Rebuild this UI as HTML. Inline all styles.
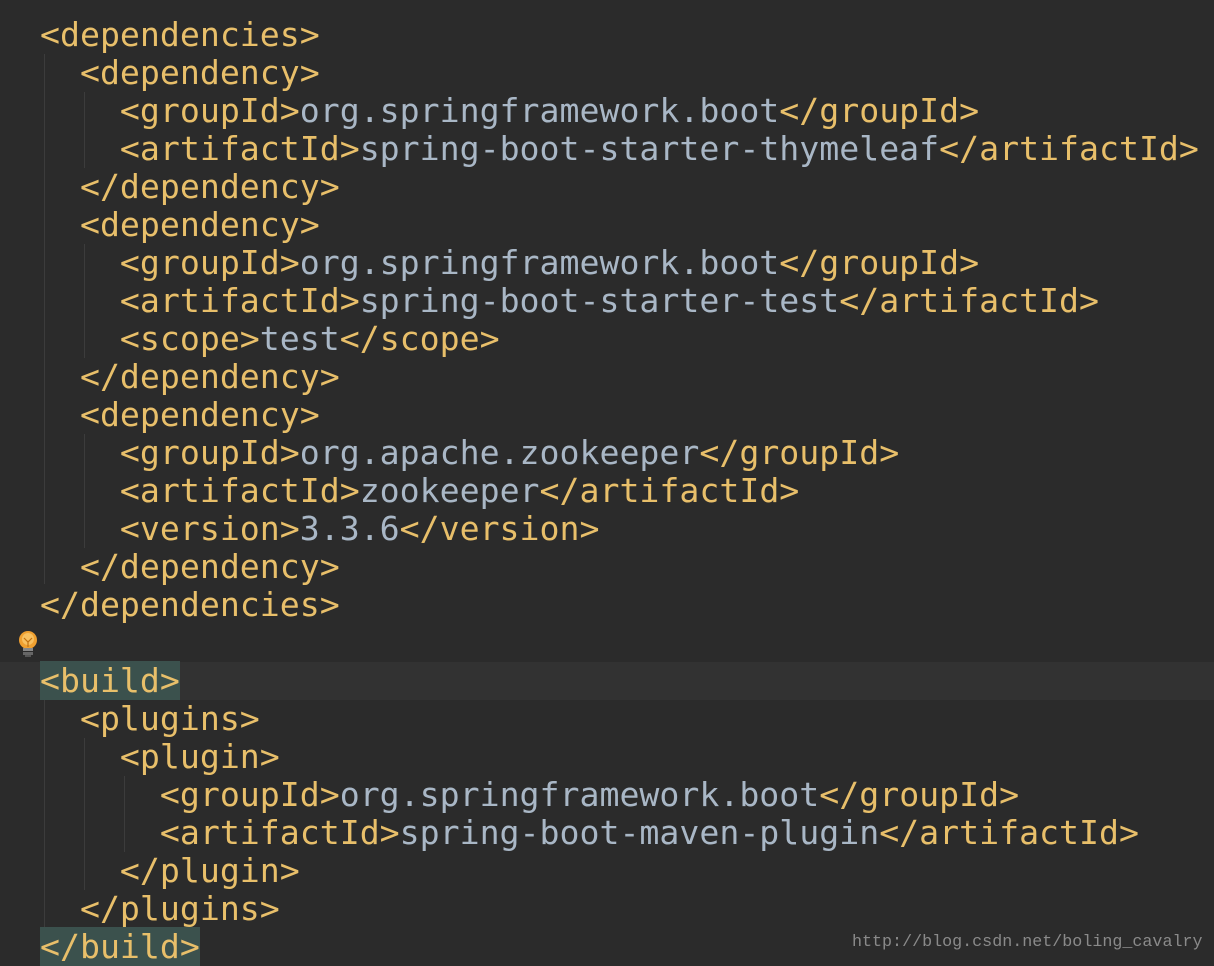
<!DOCTYPE html>
<html><head><meta charset="utf-8"><style>
html,body{margin:0;padding:0;}
body{width:1214px;height:964px;background:#2b2b2b;position:relative;overflow:hidden;font-family:"DejaVu Sans Mono","Liberation Mono",monospace;font-size:33.2px;}
.l{position:absolute;left:40px;height:38px;line-height:38px;white-space:pre;color:#e8bf6a;}
.v{color:#a9b7c6;}
.g{position:absolute;width:1px;background:#3c3c3c;}
.hl{background:#3b514d;}
</style></head><body>
<div style="position:absolute;left:0;top:662px;width:1214px;height:38px;background:#323232"></div>
<div class="g" style="left:44px;top:54px;height:530px"></div>
<div class="g" style="left:84px;top:92px;height:76px"></div>
<div class="g" style="left:84px;top:244px;height:114px"></div>
<div class="g" style="left:84px;top:434px;height:114px"></div>
<div class="g" style="left:44px;top:700px;height:228px"></div>
<div class="g" style="left:84px;top:738px;height:152px"></div>
<div class="g" style="left:124px;top:776px;height:76px"></div>
<div class="l" style="top:16px">&lt;dependencies&gt;</div>
<div class="l" style="top:54px">  &lt;dependency&gt;</div>
<div class="l" style="top:92px">    &lt;groupId&gt;<span class="v">org.springframework.boot</span>&lt;/groupId&gt;</div>
<div class="l" style="top:130px">    &lt;artifactId&gt;<span class="v">spring-boot-starter-thymeleaf</span>&lt;/artifactId&gt;</div>
<div class="l" style="top:168px">  &lt;/dependency&gt;</div>
<div class="l" style="top:206px">  &lt;dependency&gt;</div>
<div class="l" style="top:244px">    &lt;groupId&gt;<span class="v">org.springframework.boot</span>&lt;/groupId&gt;</div>
<div class="l" style="top:282px">    &lt;artifactId&gt;<span class="v">spring-boot-starter-test</span>&lt;/artifactId&gt;</div>
<div class="l" style="top:320px">    &lt;scope&gt;<span class="v">test</span>&lt;/scope&gt;</div>
<div class="l" style="top:358px">  &lt;/dependency&gt;</div>
<div class="l" style="top:396px">  &lt;dependency&gt;</div>
<div class="l" style="top:434px">    &lt;groupId&gt;<span class="v">org.apache.zookeeper</span>&lt;/groupId&gt;</div>
<div class="l" style="top:472px">    &lt;artifactId&gt;<span class="v">zookeeper</span>&lt;/artifactId&gt;</div>
<div class="l" style="top:510px">    &lt;version&gt;<span class="v">3.3.6</span>&lt;/version&gt;</div>
<div class="l" style="top:548px">  &lt;/dependency&gt;</div>
<div class="l" style="top:586px">&lt;/dependencies&gt;</div>
<svg style="position:absolute;left:17px;top:630px" width="22" height="30" viewBox="0 0 22 30">
<circle cx="11" cy="10" r="9" fill="#f0a030"/><circle cx="11" cy="9" r="6" fill="#f8c060"/>
<path d="M7 8l4 4 4-4M11 12v5" stroke="#c07010" stroke-width="1.2" fill="none"/>
<rect x="6" y="18" width="10" height="3" fill="#888"/><rect x="6" y="22" width="10" height="3" fill="#666"/><rect x="8" y="25" width="6" height="2" fill="#555"/>
</svg>
<div class="l" style="top:662px"><span class="hl">&lt;build&gt;</span></div>
<div class="l" style="top:700px">  &lt;plugins&gt;</div>
<div class="l" style="top:738px">    &lt;plugin&gt;</div>
<div class="l" style="top:776px">      &lt;groupId&gt;<span class="v">org.springframework.boot</span>&lt;/groupId&gt;</div>
<div class="l" style="top:814px">      &lt;artifactId&gt;<span class="v">spring-boot-maven-plugin</span>&lt;/artifactId&gt;</div>
<div class="l" style="top:852px">    &lt;/plugin&gt;</div>
<div class="l" style="top:890px">  &lt;/plugins&gt;</div>
<div class="l" style="top:928px"><span class="hl">&lt;/build&gt;</span></div>
<div style="position:absolute;left:852px;top:933px;font-family:'Liberation Mono',monospace;font-size:16.7px;color:#8a8a8a;white-space:pre">http://blog.csdn.net/boling_cavalry</div>
</body></html>
